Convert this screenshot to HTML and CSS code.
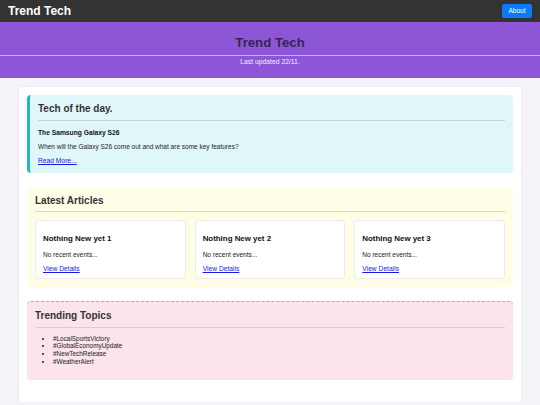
FILE: index.html
```html
<!DOCTYPE html>
<html lang="en">
<head>
<meta charset="utf-8">
<title>Trend Tech</title>
<link rel="stylesheet" href="styles.css">
</head>
<body>
<nav class="navbar">
  <span class="brand">Trend Tech</span>
  <button class="about-btn">About</button>
</nav>
<header class="hero">
  <h1 class="hero-title">Trend Tech</h1>
  <hr class="hero-rule">
  <p class="hero-sub">Last updated 22/11.</p>
</header>
<main class="container">
  <section class="box tech">
    <h2 class="box-title">Tech of the day.</h2>
    <hr class="box-rule">
    <h3 class="tech-head">The Samsung Galaxy S26</h3>
    <p class="text">When will the Galaxy S26 come out and what are some key features?</p>
    <a class="link" href="#">Read More...</a>
  </section>
  <section class="box latest">
    <h2 class="box-title">Latest Articles</h2>
    <hr class="box-rule">
    <div class="cards">
      <div class="card">
        <h3 class="card-title">Nothing New yet 1</h3>
        <p class="text">No recent events...</p>
        <a class="link" href="#">View Details</a>
      </div>
      <div class="card">
        <h3 class="card-title">Nothing New yet 2</h3>
        <p class="text">No recent events...</p>
        <a class="link" href="#">View Details</a>
      </div>
      <div class="card">
        <h3 class="card-title">Nothing New yet 3</h3>
        <p class="text">No recent events...</p>
        <a class="link" href="#">View Details</a>
      </div>
    </div>
  </section>
  <section class="box trending">
    <h2 class="box-title">Trending Topics</h2>
    <hr class="box-rule">
    <ul class="topics">
      <li>#LocalSportsVictory</li>
      <li>#GlobalEconomyUpdate</li>
      <li>#NewTechRelease</li>
      <li>#WeatherAlert</li>
    </ul>
  </section>
</main>
</body>
</html>
```

FILE: styles.css
```css
* { box-sizing: border-box; }

body {
  margin: 0;
  background: #f4f3f9;
  font-family: "Liberation Sans", Arial, sans-serif;
  color: #222;
}

.navbar {
  height: 22px;
  background: #333333;
  display: flex;
  justify-content: space-between;
  align-items: center;
  padding: 0 8px;
}

.brand {
  color: #ffffff;
  font-weight: bold;
  font-size: 12px;
  line-height: 14px;
}

.about-btn {
  width: 30px;
  height: 14px;
  padding: 0;
  border: none;
  border-radius: 2px;
  background: #0a7bf5;
  color: #ffffff;
  font-family: "Liberation Sans", Arial, sans-serif;
  font-size: 6.5px;
  line-height: 14px;
}

.hero {
  background: #8c56d6;
  padding: 13px 0 12px;
  text-align: center;
}

.hero-title {
  margin: 0;
  font-size: 13.2px;
  line-height: 16px;
  font-weight: bold;
  color: #36264f;
}

.hero-rule {
  margin: 4px 0 0;
  border: none;
  height: 1px;
  background: #c8abef;
}

.hero-sub {
  margin: 2px 0 0;
  font-size: 6.8px;
  line-height: 8px;
  color: #f4eefc;
}

.container {
  margin: 9px 19px 0;
  padding: 8px;
  background: #ffffff;
  box-shadow: 0 0 3px rgba(0, 0, 0, 0.06);
}

.box {
  padding: 8px;
  border-radius: 4px;
  margin-bottom: 14px;
}

.tech {
  background: #e0f7fa;
  border-left: 3px solid #1cb8c6;
}

.latest { background: #fffde6; }

.trending {
  background: #fce4ec;
  border-top: 1px dashed #e48fb0;
}

.box-title {
  margin: 0;
  font-size: 10px;
  line-height: 12px;
  font-weight: bold;
  color: #333333;
}

.box-rule {
  margin: 4.5px 0 0;
  border: none;
  height: 1px;
  background: #c9d2d5;
}

.latest .box-rule { background: #d8d6c8; }
.trending .box-rule { background: #dccbd1; }

.tech-head {
  margin: 8px 0 0;
  font-size: 6.7px;
  line-height: 8px;
  font-weight: bold;
  color: #111;
}

.text {
  margin: 6px 0 0;
  font-size: 6.5px;
  line-height: 8px;
  color: #222;
}

.link {
  display: block;
  margin-top: 6px;
  font-size: 6.7px;
  line-height: 8px;
  color: #1a1ae0;
  text-decoration: underline;
}

.cards {
  margin-top: 8px;
  display: grid;
  grid-template-columns: 1fr 1fr 1fr;
  gap: 9px;
}

.card {
  background: #ffffff;
  border: 1px solid #ececec;
  border-radius: 3px;
  padding: 6px 7px 5px;
}

.card-title {
  margin: 7px 0 0;
  font-size: 7.9px;
  line-height: 10px;
  font-weight: bold;
  color: #111;
}

.card .text { margin-top: 7px; }

.topics {
  margin: 7px 0 6px;
  padding-left: 18px;
  font-size: 6.4px;
  line-height: 7.8px;
  color: #222;
}
```
